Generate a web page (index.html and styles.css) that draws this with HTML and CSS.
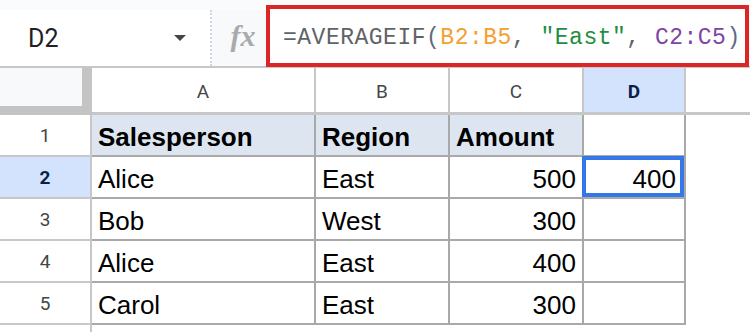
FILE: index.html
```html
<!DOCTYPE html>
<html lang="en">
<head>
    <meta charset="UTF-8">
    <meta name="viewport" content="width=device-width, initial-scale=1.0">
    <title>AVERAGEIF</title>
    <link rel="stylesheet" href="styles.css">
</head>
<body>
    <div class="toolbar">
        <div class="name-box">
            <span class="name-text">D2</span>
            <span class="caret"></span>
        </div>
        <div class="fx-area"><span class="fx">fx</span></div>
        <div class="formula-box">
            <span class="f-base">=AVERAGEIF</span><span class="f-paren">(</span><span class="f-orange">B2:B5</span><span class="f-base">, </span><span class="f-green">"East"</span><span class="f-base">, </span><span class="f-purple">C2:C5</span><span class="f-paren">)</span>
        </div>
    </div>

    <div class="sheet">
        <div class="corner"></div>
        <div class="ch">A</div>
        <div class="ch">B</div>
        <div class="ch">C</div>
        <div class="ch ch-active">D</div>
        <div class="ch ch-last"></div>

        <div class="rh">1</div>
        <div class="c c-head">Salesperson</div>
        <div class="c c-head">Region</div>
        <div class="c c-head">Amount</div>
        <div class="c"></div>
        <div class="blank"></div>

        <div class="rh rh-active">2</div>
        <div class="c">Alice</div>
        <div class="c">East</div>
        <div class="c num">500</div>
        <div class="c num sel">400</div>
        <div class="blank"></div>

        <div class="rh">3</div>
        <div class="c">Bob</div>
        <div class="c">West</div>
        <div class="c num">300</div>
        <div class="c"></div>
        <div class="blank"></div>

        <div class="rh">4</div>
        <div class="c">Alice</div>
        <div class="c">East</div>
        <div class="c num">400</div>
        <div class="c"></div>
        <div class="blank"></div>

        <div class="rh">5</div>
        <div class="c">Carol</div>
        <div class="c">East</div>
        <div class="c num">300</div>
        <div class="c"></div>
        <div class="blank"></div>

        <div class="rh rh-open"></div>
        <div class="blank"></div>
        <div class="blank"></div>
        <div class="blank"></div>
        <div class="blank"></div>
        <div class="blank"></div>
    </div>
</body>
</html>
```

FILE: styles.css
```css
body {
    margin: 0;
    width: 750px;
    height: 332px;
    overflow: hidden;
    background-color: #ffffff;
    font-family: Roboto, 'Liberation Sans', Arial, sans-serif;
    color: #202124;
}

/* formula bar */

.toolbar {
    display: flex;
    height: 66px;
    background-color: #f9fbfd;
    border-bottom: 2px solid #c7c7c7;
}

.name-box {
    display: flex;
    align-items: center;
    justify-content: space-between;
    box-sizing: border-box;
    width: 212px;
    height: 56px;
    margin-top: 10px;
    padding: 0 24px 0 28px;
    background-color: #ffffff;
    border-right: 2px dotted #c9d7ea;
}

.name-text {
    font-size: 25px;
    color: #202124;
}

.caret {
    width: 0;
    height: 0;
    border-left: 6px solid transparent;
    border-right: 6px solid transparent;
    border-top: 6px solid #444746;
}

.fx-area {
    display: flex;
    align-items: center;
    justify-content: center;
    width: 54px;
    height: 56px;
    margin-top: 10px;
    background-color: #f8f9fa;
}

.fx {
    font-family: 'Liberation Serif', serif;
    font-style: italic;
    font-weight: bold;
    font-size: 30px;
    color: #a8abae;
    margin-left: 8px;
    margin-top: -4px;
}

.formula-box {
    display: flex;
    align-items: center;
    box-sizing: border-box;
    width: 483px;
    height: 62px;
    margin-top: 5px;
    padding: 4px 0 0 13px;
    background-color: #ffffff;
    border: 4px solid #dc2626;
    font-family: 'Liberation Mono', monospace;
    font-size: 23px;
    letter-spacing: 0.5px;
    white-space: pre;
}

.f-base { color: #5f6368; }
.f-paren { color: #5d6b7e; }
.f-orange { color: #f4a031; }
.f-green { color: #1e8e3e; }
.f-purple { color: #8043a6; }

/* grid */

.sheet {
    display: grid;
    grid-template-columns: 92px 224px 134px 134px 102px 1fr;
    grid-template-rows: 47px repeat(5, 42px) 1fr;
    height: 264px;
}

.corner {
    box-sizing: border-box;
    background-color: #f8f9fa;
    border-right: 10px solid #c4c4c4;
    border-bottom: 9px solid #c4c4c4;
}

.ch {
    display: flex;
    align-items: center;
    justify-content: center;
    box-sizing: border-box;
    padding-top: 2px;
    border-right: 2px solid #c7c7c7;
    border-bottom: 3px solid #c7c7c7;
    font-size: 19px;
    color: #444746;
}

.ch-active {
    background-color: #d3e3fd;
    color: #0b1f47;
    font-weight: bold;
}

.ch-last {
    border-right: none;
}

.rh {
    display: flex;
    align-items: center;
    justify-content: center;
    box-sizing: border-box;
    border-right: 2px solid #c7c7c7;
    border-bottom: 2px solid #c7c7c7;
    font-size: 19px;
    color: #444746;
}

.rh-active {
    background-color: #d3e3fd;
    color: #0b1f47;
    font-weight: bold;
}

.rh-open {
    border-bottom: none;
}

.c {
    display: flex;
    align-items: flex-end;
    box-sizing: border-box;
    padding: 0 6px 5px 6px;
    border-right: 2px solid #a9a9a9;
    border-bottom: 2px solid #a9a9a9;
    font-family: 'Liberation Sans', Arial, sans-serif;
    font-size: 26px;
    line-height: 1;
    color: #000000;
}

.c-head {
    background-color: #dde6f0;
    font-weight: bold;
}

.num {
    justify-content: flex-end;
}

.sel {
    position: relative;
    padding-right: 8px;
}

.sel::after {
    content: "";
    position: absolute;
    left: -2px;
    top: -1px;
    right: 0;
    bottom: 0;
    border: 4px solid #3577e6;
}

.blank {
    background-color: #ffffff;
}
```
